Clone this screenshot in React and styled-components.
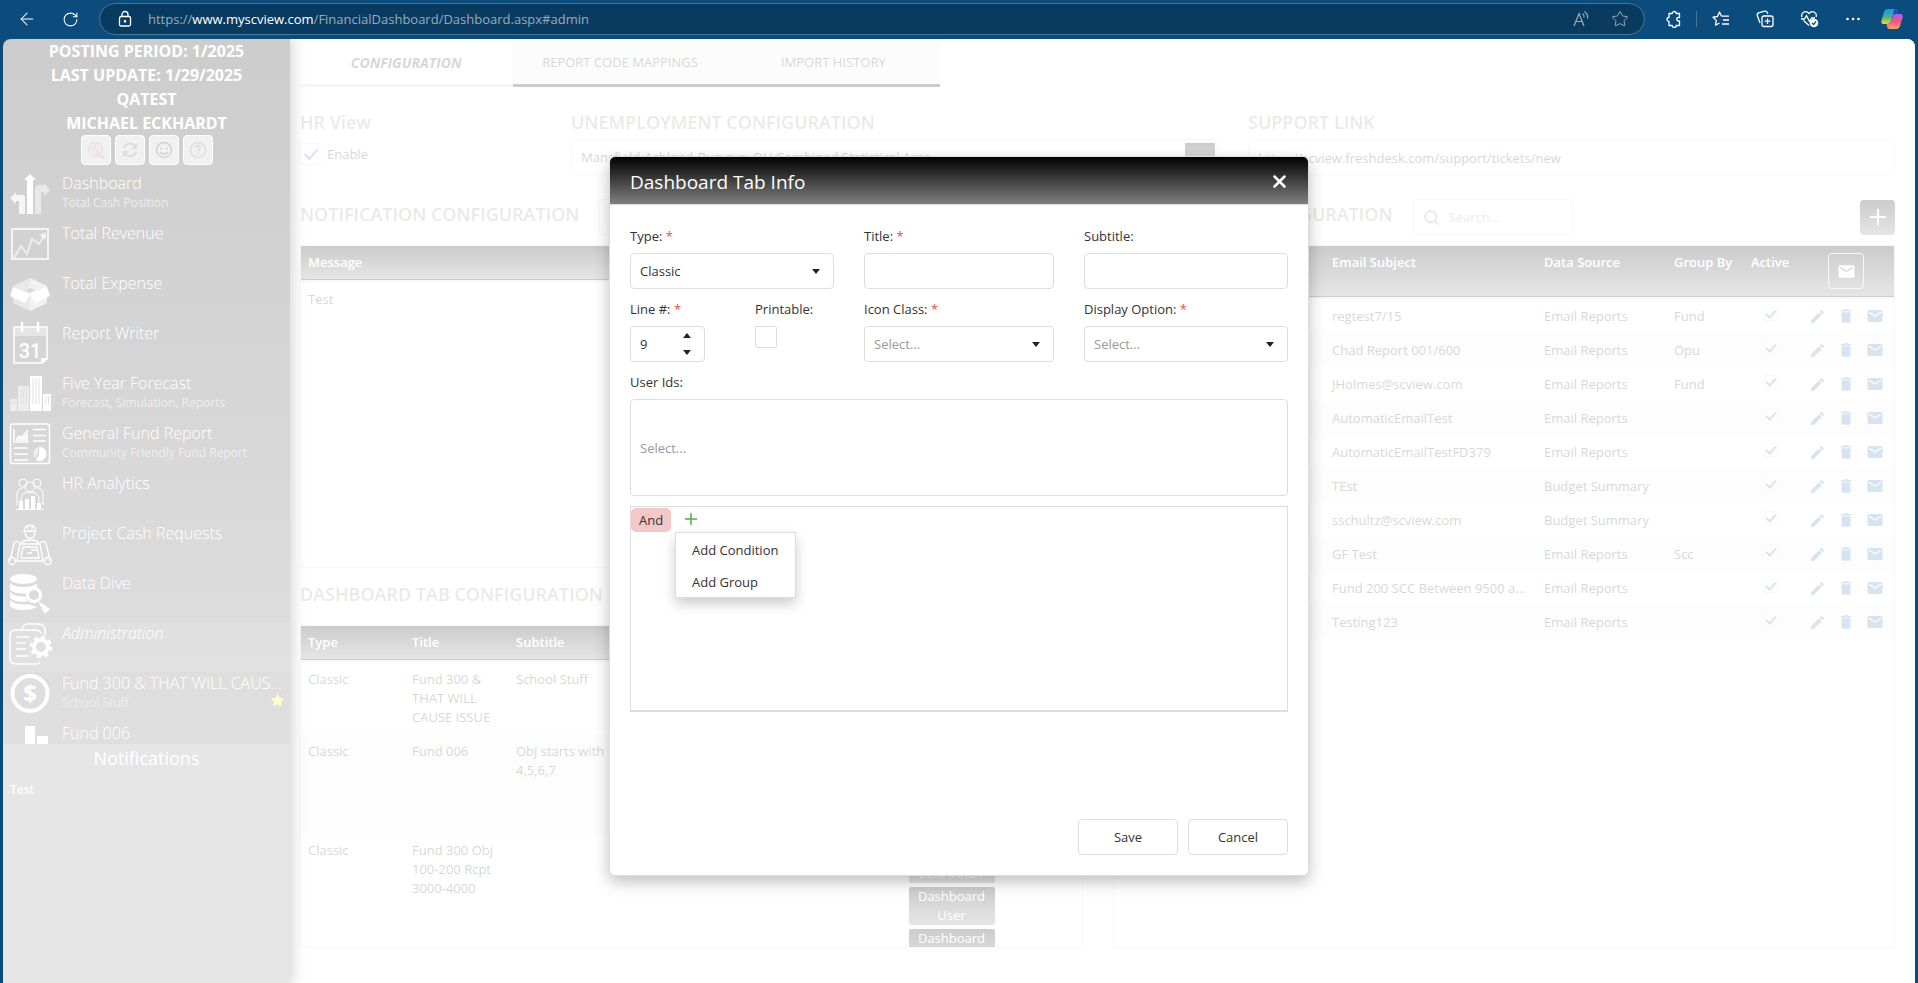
import React, { useState } from "react";
import styled, { createGlobalStyle, css } from "styled-components";
import { ArrowLeft, RotateCw, Star, Search } from "lucide-react";
import { MdEdit, MdDelete, MdEmail } from "react-icons/md";

const GlobalStyle = createGlobalStyle`
	* {
		box-sizing: border-box;
	}
	body {
		margin: 0;
		overflow: hidden;
		font-family: "Open Sans", "Noto Sans", sans-serif;
		font-size: 13px;
		line-height: 19px;
		color: #333;
	}
	button,
	input,
	select {
		font: inherit;
		color: inherit;
	}
	svg {
		display: block;
		flex: none;
	}
`;

const darkGradient = "linear-gradient(#000, #808080)";

/* ---------- browser ---------- */

const Window = styled.div`
	display: flex;
	flex-direction: column;
	height: 100vh;
	background: #0c4c7d;
`;

const BrowserBar = styled.header`
	display: flex;
	align-items: center;
	flex: none;
	height: 39px;
	padding: 0 9px 1px 16px;
	color: #fff;
`;

const BarButton = styled.button`
	display: flex;
	align-items: center;
	justify-content: center;
	width: ${(props) => props.$width || 44}px;
	height: 30px;
	padding: 0;
	border: 0;
	background: none;
	color: ${(props) => (props.$muted ? "#a3acb5" : "#fff")};
`;

const AddressBar = styled.div`
	display: flex;
	align-items: center;
	flex: 1;
	height: 32px;
	margin: 0 7px 0 6px;
	padding: 0 5px 0 16px;
	border: 1px solid #4a7596;
	border-radius: 16px;
	background: #093b61;
`;

const Url = styled.div`
	flex: 1;
	margin-left: 14px;
	color: #9aabb9;
	white-space: nowrap;

	b {
		font-weight: 400;
		color: #fff;
	}
`;

const BarDivider = styled.span`
	width: 1px;
	height: 16px;
	margin-right: 2px;
	background: #4a7596;
`;

const BarLeft = styled.div`
	display: flex;
	gap: 21px;
	width: 77px;
`;

/* ---------- app shell ---------- */

const Shell = styled.div`
	position: relative;
	display: flex;
	flex: 1;
	min-height: 0;
	margin: 0 3px;
	border-radius: 8px 8px 0 0;
	background: #fff;
	overflow: hidden;
`;

const Sidebar = styled.aside`
	display: flex;
	flex-direction: column;
	flex: none;
	width: 287px;
	background: #808080;
	box-shadow: 0 0 14px 2px rgba(0, 0, 0, 0.9);
	color: #fff;
	z-index: 1;
`;

const SidebarTop = styled.div`
	display: flex;
	flex-direction: column;
	flex: 1;
	min-height: 0;
	background: linear-gradient(#040404, #626262);
	overflow: hidden;
`;

const Account = styled.div`
	flex: none;
	font-size: 16px;
	font-weight: 700;
	line-height: 24px;
	text-align: center;
`;

const QuickButtons = styled.div`
	display: flex;
	flex: none;
	justify-content: center;
	gap: 4px;
	margin-bottom: 7px;

	button {
		display: flex;
		align-items: center;
		justify-content: center;
		width: 30px;
		height: 30px;
		padding: 0;
		border: 1px solid #fff;
		border-radius: 4px;
		background: #bbb;
		color: #333;
	}
`;

const Menu = styled.nav`
	display: flex;
	flex-direction: column;
	min-height: 0;
`;

const MenuLink = styled.a`
	display: flex;
	flex: none;
	align-items: flex-start;
	gap: 12px;
	height: 50px;
	padding: 0 6px 0 7px;
	color: #fff;
	font-style: ${(props) => (props.$active ? "italic" : "normal")};
	background: ${(props) => (props.$active ? "rgba(255, 255, 255, 0.1)" : "none")};
	text-decoration: none;

	> svg {
		margin-top: 2px;
		overflow: visible;
	}
`;

const MenuText = styled.span`
	display: flex;
	flex: 1;
	flex-direction: column;
	min-width: 0;
`;

const MenuTitle = styled.span`
	font-size: 16px;
	font-weight: 300;
	line-height: 22px;
	overflow: hidden;
	text-overflow: ellipsis;
	white-space: nowrap;
`;

const MenuSub = styled.span`
	display: flex;
	justify-content: space-between;
	font-size: 12px;
	line-height: 18px;
	color: #aaa;
`;

const Notifications = styled.section`
	flex: none;
	height: 239px;
	padding: 2px 7px;
	font-size: 12px;
	font-weight: 600;

	h2 {
		margin: 0 0 10px;
		font-size: 18px;
		font-weight: 400;
		line-height: 24px;
		text-align: center;
	}
`;

const Main = styled.main`
	display: flex;
	flex: 1;
	flex-direction: column;
	min-width: 0;
	padding: 0 20px 35px 10px;
`;

const Tabs = styled.div`
	display: grid;
	grid-template-columns: repeat(3, 1fr);
	flex: none;
	width: 640px;
	height: 48px;
`;

const Tab = styled.button`
	padding: 2px 0 0;
	border: 0;
	border-right: ${(props) => (props.$active ? "1px solid #ddd" : 0)};
	border-bottom: 3px solid ${(props) => (props.$active ? "#d0d0d0" : "#000")};
	background: ${(props) => (props.$active ? "#fff" : "#f0f0f0")};
	font-size: ${(props) => (props.$active ? 14 : 13)}px;
	font-style: ${(props) => (props.$active ? "italic" : "normal")};
	font-weight: ${(props) => (props.$active ? 700 : 400)};
`;

const ConfigRow = styled.div`
	display: grid;
	grid-template-columns: 241px 1fr 1fr;
	gap: 30px;
	flex: none;
	margin-top: 23px;
`;

const Heading = styled.h2`
	margin: 0;
	font-size: 18px;
	font-weight: 600;
	line-height: 24px;
	color: #9b918c;
	white-space: nowrap;
`;

const boxBorder = css`
	border: 1px solid #ddd;
	border-radius: 4px;
	background: #fff;
`;

const ConfigField = styled.div`
	display: flex;
	flex-direction: column;
	gap: 5px;
`;

const TextInput = styled.input`
	${boxBorder}
	width: 100%;
	height: ${(props) => (props.$tall ? 97 : 36)}px;
	padding: 1px 9px 0;
	outline: 0;

	&::placeholder {
		color: #999;
		opacity: 1;
	}
`;

const SelectWrap = styled.div`
	${boxBorder}
	position: relative;
	display: flex;
	align-items: center;
	height: 36px;

	select {
		flex: 1;
		align-self: stretch;
		min-width: 0;
		padding: 1px 9px 0;
		border: 0;
		background: none;
		appearance: none;
		outline: 0;
		color: ${(props) => (props.$empty ? "#999" : "inherit")};
	}
	svg {
		position: absolute;
		right: 13px;
		pointer-events: none;
	}
`;

const DropIcon = styled.span`
	flex: none;
	width: 30px;
	height: 28px;
	margin-right: 2px;
	background: ${darkGradient};
`;

const CheckLabel = styled.label`
	display: flex;
	align-items: center;
	gap: 5px;
	height: 30px;
`;

const CheckBox = styled.input`
	display: grid;
	place-content: center;
	flex: none;
	width: ${(props) => props.$size || 22}px;
	height: ${(props) => props.$size || 22}px;
	margin: 0;
	border: 1px solid #ddd;
	border-radius: 2px;
	background: #fff;
	appearance: none;

	&:checked::before {
		content: "";
		width: ${(props) => (props.$size ? 4 : 6)}px;
		height: ${(props) => (props.$size ? 8 : 11)}px;
		margin-bottom: 3px;
		border: solid #337ab7;
		border-width: 0 2px 2px 0;
		transform: rotate(42deg);
	}
`;

const Panels = styled.div`
	display: grid;
	grid-template-columns: 1fr 1fr;
	gap: 30px;
	flex: 1;
	min-height: 0;
	margin-top: 24px;
`;

const PanelColumn = styled.div`
	display: flex;
	flex-direction: column;
	min-width: 0;
	min-height: 0;
`;

const PanelHead = styled.div`
	display: flex;
	align-items: center;
	flex: none;
	gap: 20px;
	height: ${(props) => (props.$plain ? 57 : 46)}px;
	padding-bottom: ${(props) => (props.$plain ? 5 : 10)}px;

	${Heading} {
		padding-bottom: ${(props) => (props.$plain ? 0 : 7)}px;
	}
`;

const SearchBox = styled.label`
	${boxBorder}
	display: flex;
	align-items: center;
	gap: 9px;
	width: 160px;
	height: 36px;
	padding-left: 9px;
	color: #999;

	input {
		flex: 1;
		min-width: 0;
		padding: 0;
		border: 0;
		outline: 0;
		background: none;
	}
	input::placeholder {
		color: #999;
		opacity: 1;
	}
`;

const AddButton = styled.button`
	display: flex;
	align-items: center;
	justify-content: center;
	width: 35px;
	height: 35px;
	margin-left: auto;
	padding: 0;
	border: 0;
	border-radius: 4px;
	background: ${darkGradient};
	color: #fff;
`;

const TableBox = styled.div`
	flex: ${(props) => (props.$height ? "none" : 1)};
	height: ${(props) => (props.$height ? `${props.$height}px` : "auto")};
	min-height: 0;
	border: 1px solid #ddd;
	overflow: hidden;
`;

const Table = styled.table`
	width: 100%;
	border-collapse: collapse;
	table-layout: fixed;

	thead tr {
		height: ${(props) => (props.$tallHead ? 52 : 35)}px;
		border-bottom: 2px solid #ddd;
		background: ${darkGradient};
	}
	th {
		padding: 7px;
		color: #fff;
		font-weight: 600;
		text-align: left;
		vertical-align: top;
	}
	td {
		padding: 8px 7px 7px;
		overflow: hidden;
		text-overflow: ellipsis;
		vertical-align: top;
		white-space: ${(props) => (props.$wrap ? "normal" : "nowrap")};
	}
	tbody tr:nth-child(even) {
		background: #f5f5f5;
	}
`;

const Row = styled.tr`
	height: ${(props) => props.$height || 34}px;
`;

const CheckCell = styled.td`
	${CheckBox} {
		margin-left: 13px;
	}
`;

const Actions = styled.div`
	display: flex;
	align-items: center;
	gap: 11px;
	color: #337ab7;

	button {
		padding: 0;
		border: 0;
		background: none;
	}
`;

const MailAllButton = styled.button`
	display: flex;
	align-items: center;
	justify-content: center;
	width: 36px;
	height: 36px;
	margin-left: 19px;
	padding: 0;
	border: 1px solid #ddd;
	border-radius: 4px;
	background: none;
`;

const RoleTag = styled.span`
	display: block;
	width: 86px;
	margin-bottom: 4px;
	border-radius: 2px;
	background: ${darkGradient};
	color: #fff;
	text-align: center;
`;

const RoleCell = styled.td`
	&& {
		padding-top: 12px;
	}
`;

/* ---------- dialog ---------- */

const Overlay = styled.div`
	position: absolute;
	inset: 0;
	z-index: 2;
	display: flex;
	align-items: center;
	justify-content: center;
	padding-top: 10px;
	background: rgba(255, 255, 255, 0.8);
`;

const Dialog = styled.section`
	display: flex;
	flex-direction: column;
	width: 700px;
	border: 1px solid #ddd;
	border-radius: 6px;
	background: #fff;
	box-shadow: 0 6px 16px rgba(0, 0, 0, 0.25);
`;

const DialogHeader = styled.header`
	display: flex;
	align-items: center;
	justify-content: space-between;
	height: 48px;
	padding: 2px 20px 0;
	border-bottom: 1px solid #ddd;
	border-radius: 5px 5px 0 0;
	background: ${darkGradient};
	color: #fff;

	h1 {
		margin: 0;
		font-size: 19px;
		font-weight: 400;
		line-height: 26px;
	}
	button {
		padding: 2px;
		border: 0;
		background: none;
	}
`;

const Form = styled.form`
	display: flex;
	flex-direction: column;
	gap: 9px;
	padding: 20px;
`;

const FormGrid = styled.div`
	display: grid;
	grid-template-columns: 204fr 190fr 204fr;
	gap: 9px 30px;
`;

const Field = styled.div`
	display: flex;
	flex-direction: column;
	align-items: stretch;
	gap: 6px;
	width: ${(props) => (props.$width ? `${props.$width}px` : "auto")};

	> label {
		line-height: 22px;
	}
	i {
		color: #d9534f;
		font-style: normal;
	}
`;

const FieldPair = styled.div`
	display: flex;
	gap: 50px;
`;

const NumberBox = styled.div`
	${boxBorder}
	display: flex;
	height: 36px;

	input {
		flex: 1;
		min-width: 0;
		padding: 0 0 0 9px;
		border: 0;
		outline: 0;
		background: none;
		appearance: textfield;
	}
	input::-webkit-inner-spin-button {
		display: none;
	}
`;

const Spinner = styled.div`
	display: flex;
	flex-direction: column;
	width: 34px;

	button {
		display: flex;
		flex: 1;
		align-items: center;
		justify-content: center;
		padding: 0;
		border: 0;
		background: none;
	}
`;

const FilterBox = styled.div`
	position: relative;
	display: flex;
	align-items: flex-start;
	gap: 12px;
	height: 206px;
	margin-top: 1px;
	padding-top: 1px;
	border: 1px solid #ddd;
	border-bottom-width: 2px;
`;

const GroupButton = styled.button`
	height: 24px;
	padding: 1px 8px 0;
	border: 0;
	border-radius: 5px;
	background: #f5c8c8;
`;

const PlusButton = styled.button`
	height: 22px;
	padding: 0 2px;
	border: 0;
	background: none;
	color: #4cae4c;
`;

const FilterMenu = styled.div`
	position: absolute;
	top: 25px;
	left: 44px;
	display: flex;
	flex-direction: column;
	border: 1px solid #ddd;
	background: #fff;
	box-shadow: 0 6px 12px rgba(0, 0, 0, 0.2);

	button {
		height: 32px;
		padding: 3px 17px 0 16px;
		border: 0;
		background: none;
		text-align: left;
	}
`;

const Footer = styled.footer`
	display: flex;
	justify-content: flex-end;
	gap: 10px;
	margin-top: 98px;

	button {
		${boxBorder}
		width: 100px;
		height: 36px;
		padding-top: 2px;
	}
`;

/* ---------- drawings ---------- */

const Caret = ({ up }) => (
	<svg width="8" height="5" viewBox="0 0 8 5" fill="#222">
		<path d={up ? "M0 5h8L4 0z" : "M0 0h8L4 5z"} />
	</svg>
);

const Plus = ({ size, width }) => (
	<svg width={size} height={size} viewBox="0 0 16 16" stroke="currentColor" strokeWidth={width}>
		<path d="M8 0v16M0 8h16" />
	</svg>
);

const LockIcon = () => (
	<svg width="18" height="18" viewBox="0 0 18 18" fill="none" stroke="#fff" strokeWidth="1.3">
		<rect x="3.5" y="6.5" width="11" height="9.5" rx="1.5" />
		<path d="M6 6.500V4.500a3 3 0 0 1 6 0v2" />
		<circle cx="9" cy="11.300" r=".7" fill="#fff" />
	</svg>
);

const ReadAloudIcon = () => (
	<svg width="18" height="18" viewBox="0 0 18 18" fill="none" stroke="currentColor" strokeWidth="1.2">
		<path d="M2 16L7 3.500 12 16M3.800 11.500h6.500M10.500 3.500q2 1.500 1.500 4M12.500 1.500q4 3 3 7" />
	</svg>
);

const PuzzleIcon = () => (
	<svg width="18" height="18" viewBox="0 0 18 18" fill="none" stroke="currentColor" strokeWidth="1.3">
		<path d="M4 3.500h3.200a2 2 0 0 1 4 0h3.300v4h-1a1.700 1.700 0 0 0 0 3.500h1v4.500h-3.300a2 2 0 0 1-4 0H4v-4a2 2 0 0 1 0-4z" strokeLinejoin="round" />
	</svg>
);

const FavoritesIcon = () => (
	<svg width="18" height="18" viewBox="0 0 18 18" fill="none" stroke="currentColor" strokeWidth="1.3" strokeLinejoin="round">
		<path d="M9.500 6.200L7.500 2 5.500 6.500 1 7.200l3.300 3.200-.8 4.800 4-2.200M9.500 6.200h7.500M11 10h6M10 14h7" />
	</svg>
);

const CollectionsIcon = () => (
	<svg width="18" height="18" viewBox="0 0 18 18" fill="none" stroke="currentColor" strokeWidth="1.3" strokeLinejoin="round">
		<rect x="6" y="6" width="11" height="10.500" rx="2" />
		<path d="M11.500 8.500v5.500M8.700 11.200h5.600M4 13L1.300 5.500q-.5-2 1.300-2.700l6-1.600q2-.4 2.800 1.500l.4 1.300" />
	</svg>
);

const HealthIcon = () => (
	<svg width="19" height="18" viewBox="0 0 19 18" fill="none" stroke="currentColor" strokeWidth="1.3" strokeLinejoin="round">
		<path d="M2 7C.5 3 5.500-.5 9 3.500 12.500-.5 17.500 3 16 7M3.500 10.500L9 15.500M1 9h3.500L6.500 5.500l3 6 2-3.500H15" />
		<circle cx="14" cy="13" r="4.300" fill="#fff" stroke="none" />
		<path d="M12 13l1.500 1.500 2.500-3" stroke="#0c4c7d" />
	</svg>
);

const MoreIcon = () => (
	<svg width="16" height="16" viewBox="0 0 16 16" fill="currentColor">
		<circle cx="2.500" cy="8" r="1.300" />
		<circle cx="8" cy="8" r="1.300" />
		<circle cx="13.500" cy="8" r="1.300" />
	</svg>
);

const CopilotIcon = () => (
	<svg width="24" height="22" viewBox="0 0 24 22">
		<defs>
			<linearGradient id="copilotA" x1="0" y1="0" x2="0" y2="1">
				<stop offset="0" stopColor="#1b96f0" />
				<stop offset=".5" stopColor="#3cb38a" />
				<stop offset="1" stopColor="#ffd02f" />
			</linearGradient>
			<linearGradient id="copilotB" x1="0" y1="0" x2="0" y2="1">
				<stop offset="0" stopColor="#a95bf0" />
				<stop offset=".5" stopColor="#f0568e" />
				<stop offset="1" stopColor="#ffa45c" />
			</linearGradient>
		</defs>
		<path d="M7 1h8q2 0 2.700 3l.6 2H15q-2 0-2.700 2.500L10.500 14Q9.500 16 7 16H3.500Q.5 16 1.500 12L4 4Q5 1 7 1z" fill="url(#copilotA)" />
		<path d="M14 1q2.500 0 3.300 2.500l.8 2.500H15q-1.500 0-2 1.500z" fill="#1b48c8" />
		<path d="M17 21H9.500Q7.500 21 7 18.500L6.500 16q3.500 0 4.300-2.500l1.800-5Q13.500 6 16 6h4.500q3 0 2 4l-2.500 8q-1 3-3 3z" fill="url(#copilotB)" />
	</svg>
);

const stroke = { fill: "none", stroke: "#fff" };

const menuIcons = {
	arrows: (
		<>
			<path d="M20 0l6 6h-3v34h-6V6h-3z" />
			<path d="M15 40H9V27H6v3l-6-6 6-6v3h7q2 0 2 2z" opacity=".8" />
			<path d="M25 40V16q0-5 5-5h4V9l6 7-6 6v-4h-3v22z" opacity=".5" />
		</>
	),
	trend: (
		<>
			<rect x="2" y="5" width="36" height="30" {...stroke} strokeWidth="1.500" />
			<path d="M4 34l7-12 6 8 5-15 7 5 5-8" {...stroke} strokeWidth="2" opacity=".6" />
			<path d="M36 8v8l-7-5z" opacity=".6" />
		</>
	),
	box: (
		<>
			<path d="M20 4L3 12v17l17 8 17-8V12z" opacity=".5" />
			<path d="M20 4v8l-5 4 5 3V37l17-8V12z" opacity=".4" />
			<path d="M20 14l5 2-5 3-5-3z" fill="#444" />
			<path d="M3 13l17 7-5 9-15-7zM37 13l-17 7 5 9 15-7z" />
		</>
	),
	calendar: (
		<>
			<path d="M4 4h32v8H4z" opacity=".4" />
			<path d="M37 35V3H4v36h28z" {...stroke} strokeWidth="1.500" />
			<path d="M12-2v10M28-2v10" {...stroke} strokeWidth="2.500" />
			<path d="M31 40v-6h6z" />
			<text x="20" y="34" fontFamily="Roboto, sans-serif" fontSize="20" fontWeight="500" textAnchor="middle">31</text>
		</>
	),
	buildings: (
		<>
			<path d="M0 25h7v12H0zM8 12h11v25H8z" opacity=".55" />
			<path d="M20 2h12v35H20zM33 20h8v17h-8z" />
			<path d="M2 27v3M5 27v3M11 14v16M13.500 14v16M16 14v16M23 4v26M26 4v26M29 4v26M36 22v8M38.500 22v8" stroke="#666" />
		</>
	),
	report: (
		<>
			<rect x=".5" y="0" width="39" height="39.500" rx="2" {...stroke} strokeWidth="1.500" />
			<path d="M4 5v13h15M23 5.500h13M23 11.500h13M23 17h13M4 24h14M4 30h14M4 36h14" {...stroke} strokeWidth="1.500" />
			<path d="M6 17v-3l3-3 3 1 3-4 3-3v12z" opacity=".8" />
			<path d="M29 23a7 7 0 1 1-3 13l3-6z" />
			<path d="M28 23v6l-3 5a7 7 0 0 1 3-11z" opacity=".6" />
		</>
	),
	people: (
		<>
			<g {...stroke}>
				<circle cx="13" cy="9" r="4" />
				<circle cx="27" cy="9" r="4" />
				<circle cx="20" cy="13" r="5" />
				<path d="M7 31V21q0-7 6-7M33 31V21q0-7-6-7M11 34v-8q0-8 9-8t9 8v8" />
			</g>
			<path d="M6 35h28v1H6zM9 27h4v8H9zM15 25h4v10h-4zM21 22h4v13h-4zM27 29h4v6h-4z" />
		</>
	),
	worker: (
		<g {...stroke} strokeWidth="1.300">
			<path d="M14 7a6 6 0 0 1 12 0zM15 8q0 6 5 6t5-6M18 1v4M22 1v4M11 20q1-4 9-4t9 4" />
			<path d="M10 20h20l3 17H7zM13 23h14l2 11H11z" />
			<path d="M10 19q-4-3-6 0L0 37M30 19q4-3 6 0l4 18" />
			<circle cx="2" cy="37" r="3.500" />
			<circle cx="38" cy="37" r="3.500" />
			<path d="M21 26h6M17 29h5" />
		</g>
	),
	database: (
		<>
			<ellipse cx="13.500" cy="5" rx="13.500" ry="5" />
			<path d="M0 9q3 4 13.500 4T27 9v5q-3 0-6 1-3 2-4 4.500Q3 20 0 15.500zM0 18q4 5 16.500 4.500 0 3 1.500 5Q3 28.500 0 23.500zM0 26q4 5 20 4.500 3 2 7 1.500-3 4-13.500 4T0 32z" />
			<circle cx="24" cy="21" r="6.500" {...stroke} strokeWidth="3" />
			<path d="M28 27l12 8-5 5z" />
		</>
	),
	admin: (
		<>
			<path d="M30 38q-1 2-4 2H6q-6 0-6-6V12q0-6 6-6h20q3 0 5 3M12 5q1-5 7-5h9q7 0 7 7v4M6 13h13M6 19h10M6 25h10M6 32h13" {...stroke} strokeWidth="1.500" />
			<circle cx="31" cy="23" r="7" {...stroke} strokeWidth="4" />
			<circle cx="31" cy="23" r="10" {...stroke} strokeWidth="2.500" strokeDasharray="4 3.850" />
		</>
	),
	dollar: (
		<>
			<circle cx="20" cy="19.500" r="17.500" {...stroke} strokeWidth="4" />
			<text x="20" y="28" fontSize="24" fontWeight="700" textAnchor="middle">$</text>
		</>
	),
	bars: <path d="M15 2h10v38H15zM27 12h11v28H27z" />,
};

const MenuIcon = ({ name }) => (
	<svg width="40" height="40" viewBox="0 0 40 40" fill="#fff">
		{menuIcons[name]}
	</svg>
);

const FindIcon = () => (
	<svg width="18" height="18" viewBox="0 0 18 18" fill="none" stroke="#777" strokeWidth="1.500">
		<circle cx="8.500" cy="8.500" r="7" />
		<path d="M13 14l4 3" strokeWidth="3" />
		<path d="M12 5H7q-2 0-2 2t2 2h3q2 0 2 2t-2 2H6M8 3v6M10 8v6" stroke="#d9534f" strokeWidth="1.200" />
	</svg>
);

const SyncIcon = () => (
	<svg width="16" height="16" viewBox="0 0 16 16" fill="none" stroke="#555" strokeWidth="2">
		<path d="M2 6.500a6 6 0 0 1 11-2M14 9.500a6 6 0 0 1-11 2" />
		<path d="M15 1v6H9zM1 15V9h6z" fill="#555" stroke="none" />
	</svg>
);

const SmileIcon = () => (
	<svg width="18" height="18" viewBox="0 0 18 18" fill="none" stroke="#222" strokeWidth="1.500">
		<circle cx="9" cy="9" r="7.500" />
		<path d="M5 11q4 4 8 0M5 7.500h2.500M11 7.500h2" />
	</svg>
);

const HelpIcon = () => (
	<svg width="18" height="18" viewBox="0 0 18 18" fill="none" stroke="#555" strokeWidth="1.500">
		<circle cx="9" cy="9" r="7.500" />
		<path d="M6.800 7q0-2.300 2.200-2.300T11.200 7Q11 8.500 9 9v1.500M9 12v1.500" />
	</svg>
);

/* ---------- data ---------- */

const menu = [
	{ icon: "arrows", title: "Dashboard", sub: "Total Cash Position" },
	{ icon: "trend", title: "Total Revenue" },
	{ icon: "box", title: "Total Expense" },
	{ icon: "calendar", title: "Report Writer" },
	{ icon: "buildings", title: "Five Year Forecast", sub: "Forecast, Simulation, Reports" },
	{ icon: "report", title: "General Fund Report", sub: "Community Friendly Fund Report" },
	{ icon: "people", title: "HR Analytics" },
	{ icon: "worker", title: "Project Cash Requests" },
	{ icon: "database", title: "Data Dive" },
	{ icon: "admin", title: "Administration", active: true },
	{ icon: "dollar", title: "Fund 300 & THAT WILL CAUSE ISSUE", sub: "School Stuff", starred: true },
	{ icon: "bars", title: "Fund 006" },
];

const emails = [
	["regtest7/15", "Email Reports", "Fund"],
	["Chad Report 001/600", "Email Reports", "Opu"],
	["JHolmes@scview.com", "Email Reports", "Fund"],
	["AutomaticEmailTest", "Email Reports", ""],
	["AutomaticEmailTestFD379", "Email Reports", ""],
	["TEst", "Budget Summary", ""],
	["sschultz@scview.com", "Budget Summary", ""],
	["GF Test", "Email Reports", "Scc"],
	["Fund 200 SCC Between 9500 and 9600", "Email Reports", ""],
	["Testing123", "Email Reports", ""],
];

const tabRows = [
	{ title: "Fund 300 & THAT WILL CAUSE ISSUE", sub: "School Stuff", height: 73, roles: [] },
	{ title: "Fund 006", sub: "Obj starts with 4,5,6,7", height: 99, roles: [] },
	{
		title: "Fund 300 Obj 100-200 Rcpt 3000-4000",
		sub: "",
		height: 117,
		roles: ["MICHAEL ECKHARDT", "Dashboard User", "Dashboard Admin"],
	},
];

/* ---------- parts ---------- */

const Browser = () => (
	<BrowserBar>
		<BarLeft>
			<BarButton $width={22} aria-label="Back"><ArrowLeft size={20} strokeWidth={1.25} /></BarButton>
			<BarButton $width={22} aria-label="Refresh"><RotateCw size={17} strokeWidth={1.5} /></BarButton>
		</BarLeft>
		<AddressBar>
			<LockIcon />
			<Url>https://<b>www.myscview.com</b>/FinancialDashboard/Dashboard.aspx#admin</Url>
			<BarButton $muted $width={40} aria-label="Read aloud"><ReadAloudIcon /></BarButton>
			<BarButton $muted $width={38} aria-label="Add to favorites"><Star size={18} strokeWidth={1.3} /></BarButton>
		</AddressBar>
		<BarButton aria-label="Extensions"><PuzzleIcon /></BarButton>
		<BarDivider />
		<BarButton aria-label="Favorites"><FavoritesIcon /></BarButton>
		<BarButton aria-label="Collections"><CollectionsIcon /></BarButton>
		<BarButton aria-label="Browser essentials"><HealthIcon /></BarButton>
		<BarButton aria-label="More"><MoreIcon /></BarButton>
		<BarButton $width={34} aria-label="Copilot"><CopilotIcon /></BarButton>
	</BrowserBar>
);

const SideMenu = () => (
	<Sidebar>
		<SidebarTop>
			<Account>
				<div>POSTING PERIOD: 1/2025</div>
				<div>LAST UPDATE: 1/29/2025</div>
				<div>QATEST</div>
				<div>MICHAEL ECKHARDT</div>
			</Account>
			<QuickButtons>
				<button aria-label="Find"><FindIcon /></button>
				<button aria-label="Sync"><SyncIcon /></button>
				<button aria-label="Feedback"><SmileIcon /></button>
				<button aria-label="Help"><HelpIcon /></button>
			</QuickButtons>
			<Menu>
				{menu.map((item) => (
					<MenuLink key={item.title} href="#admin" $active={item.active}>
						<MenuIcon name={item.icon} />
						<MenuText>
							<MenuTitle>{item.title}</MenuTitle>
							{item.sub && (
								<MenuSub>
									{item.sub}
									{item.starred && <Star size={13} fill="#ff0" color="#ff0" />}
								</MenuSub>
							)}
						</MenuText>
					</MenuLink>
				))}
			</Menu>
		</SidebarTop>
		<Notifications>
			<h2>Notifications</h2>
			Test
		</Notifications>
	</Sidebar>
);

const SearchField = ({ label }) => (
	<SearchBox>
		<Search size={17} strokeWidth={3} />
		<input type="text" placeholder="Search..." aria-label={label} />
	</SearchBox>
);

const EmailTable = () => (
	<Table $tallHead>
		<colgroup>
			<col />
			<col width="212" />
			<col width="130" />
			<col width="77" />
			<col width="58" />
			<col width="92" />
		</colgroup>
		<thead>
			<tr>
				<th />
				<th>Email Subject</th>
				<th>Data Source</th>
				<th>Group By</th>
				<th>Active</th>
				<th>
					<MailAllButton aria-label="Email all"><MdEmail size={19} color="#fff" /></MailAllButton>
				</th>
			</tr>
		</thead>
		<tbody>
			{emails.map(([subject, source, group]) => (
				<Row key={subject}>
					<td />
					<td>{subject}</td>
					<td>{source}</td>
					<td>{group}</td>
					<CheckCell>
						<CheckBox type="checkbox" $size={14} defaultChecked aria-label={`${subject} active`} />
					</CheckCell>
					<td>
						<Actions>
							<button aria-label="Edit"><MdEdit size={17} /></button>
							<button aria-label="Delete"><MdDelete size={18} /></button>
							<button aria-label="Email"><MdEmail size={18} /></button>
						</Actions>
					</td>
				</Row>
			))}
		</tbody>
	</Table>
);

const TabTable = () => (
	<Table $wrap>
		<colgroup>
			<col width="104" />
			<col width="104" />
			<col width="104" />
			<col />
			<col width="100" />
			<col width="80" />
		</colgroup>
		<thead>
			<tr>
				<th>Type</th>
				<th>Title</th>
				<th>Subtitle</th>
				<th />
				<th />
				<th />
			</tr>
		</thead>
		<tbody>
			{tabRows.map((row) => (
				<Row key={row.title} $height={row.height}>
					<td>Classic</td>
					<td>{row.title}</td>
					<td>{row.sub}</td>
					<td />
					<RoleCell>
						{row.roles.map((role) => (
							<RoleTag key={role}>{role}</RoleTag>
						))}
					</RoleCell>
					<td />
				</Row>
			))}
		</tbody>
	</Table>
);

const AdminPage = () => (
	<Main>
		<Tabs>
			<Tab $active>CONFIGURATION</Tab>
			<Tab>REPORT CODE MAPPINGS</Tab>
			<Tab>IMPORT HISTORY</Tab>
		</Tabs>
		<ConfigRow>
			<ConfigField>
				<Heading>HR View</Heading>
				<CheckLabel>
					<CheckBox type="checkbox" defaultChecked />
					Enable
				</CheckLabel>
			</ConfigField>
			<ConfigField>
				<Heading>UNEMPLOYMENT CONFIGURATION</Heading>
				<SelectWrap>
					<select aria-label="Unemployment area">
						<option>Mansfield-Ashland-Bucyrus, OH Combined Statistical Area</option>
					</select>
					<DropIcon />
				</SelectWrap>
			</ConfigField>
			<ConfigField>
				<Heading>SUPPORT LINK</Heading>
				<TextInput type="text" defaultValue="https://scview.freshdesk.com/support/tickets/new" aria-label="Support link" />
			</ConfigField>
		</ConfigRow>
		<Panels>
			<PanelColumn>
				<PanelHead>
					<Heading>NOTIFICATION CONFIGURATION</Heading>
					<SearchField label="Search notifications" />
				</PanelHead>
				<TableBox $height={323}>
					<Table>
						<thead>
							<tr>
								<th>Message</th>
							</tr>
						</thead>
						<tbody>
							<Row>
								<td>Test</td>
							</Row>
						</tbody>
					</Table>
				</TableBox>
				<PanelHead $plain>
					<Heading>DASHBOARD TAB CONFIGURATION</Heading>
				</PanelHead>
				<TableBox>
					<TabTable />
				</TableBox>
			</PanelColumn>
			<PanelColumn>
				<PanelHead>
					<Heading>EMAIL REPORT CONFIGURATION</Heading>
					<SearchField label="Search emails" />
					<AddButton aria-label="Add email"><Plus size={16} width={2} /></AddButton>
				</PanelHead>
				<TableBox>
					<EmailTable />
				</TableBox>
			</PanelColumn>
		</Panels>
	</Main>
);

const SelectField = ({ id, label, required, value }) => (
	<Field>
		<label htmlFor={id}>
			{label} {required && <i>*</i>}
		</label>
		<SelectWrap $empty={!value}>
			<select id={id}>
				<option>{value || "Select..."}</option>
			</select>
			<Caret />
		</SelectWrap>
	</Field>
);

const TabInfoDialog = () => {
	const [line, setLine] = useState(9);

	return (
		<Dialog role="dialog" aria-labelledby="dialog-title">
			<DialogHeader>
				<h1 id="dialog-title">Dashboard Tab Info</h1>
				<button aria-label="Close">
					<svg width="13" height="13" viewBox="0 0 13 13" stroke="#fff" strokeWidth="2.500" strokeLinecap="round">
						<path d="M1.500 1.500l10 10M11.500 1.500l-10 10" />
					</svg>
				</button>
			</DialogHeader>
			<Form onSubmit={(e) => e.preventDefault()}>
				<FormGrid>
					<SelectField id="type" label="Type:" required value="Classic" />
					<Field>
						<label htmlFor="title">Title: <i>*</i></label>
						<TextInput id="title" type="text" />
					</Field>
					<Field>
						<label htmlFor="subtitle">Subtitle:</label>
						<TextInput id="subtitle" type="text" />
					</Field>
					<FieldPair>
						<Field $width={75}>
							<label htmlFor="line">Line #: <i>*</i></label>
							<NumberBox>
								<input id="line" type="number" value={line} onChange={(e) => setLine(Number(e.target.value))} />
								<Spinner>
									<button type="button" aria-label="Increase" onClick={() => setLine(line + 1)}><Caret up /></button>
									<button type="button" aria-label="Decrease" onClick={() => setLine(line - 1)}><Caret /></button>
								</Spinner>
							</NumberBox>
						</Field>
						<Field>
							<label htmlFor="printable">Printable:</label>
							<CheckBox id="printable" type="checkbox" />
						</Field>
					</FieldPair>
					<SelectField id="icon-class" label="Icon Class:" required />
					<SelectField id="display-option" label="Display Option:" required />
				</FormGrid>
				<Field>
					<label htmlFor="user-ids">User Ids:</label>
					<TextInput id="user-ids" type="text" placeholder="Select..." $tall />
				</Field>
				<FilterBox>
					<GroupButton type="button">And</GroupButton>
					<PlusButton type="button" aria-label="Add"><Plus size={12} width={2} /></PlusButton>
					<FilterMenu>
						<button type="button">Add Condition</button>
						<button type="button">Add Group</button>
					</FilterMenu>
				</FilterBox>
				<Footer>
					<button type="submit">Save</button>
					<button type="button">Cancel</button>
				</Footer>
			</Form>
		</Dialog>
	);
};

const App = () => (
	<Window>
		<GlobalStyle />
		<Browser />
		<Shell>
			<SideMenu />
			<AdminPage />
			<Overlay>
				<TabInfoDialog />
			</Overlay>
		</Shell>
	</Window>
);

export default App;
